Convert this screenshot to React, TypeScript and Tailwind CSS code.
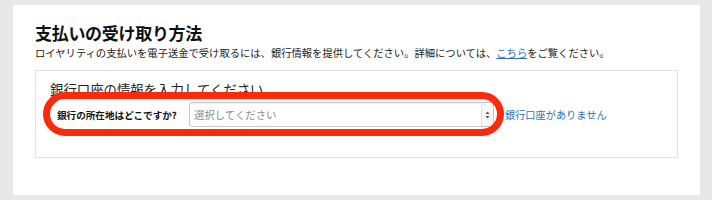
import React from "react";

const jp = { fontFamily: '"Noto Sans CJK JP", "Noto Sans", sans-serif' };

export default function App() {
  return (
    <div className="relative h-[200px] w-[712px] overflow-hidden bg-[#e8e8e8] pl-[13px] pr-[12px] pt-[5px]" style={jp}>
      <div className="h-[190px] bg-white pl-[22px] pr-[22px] pt-[18px]">
        <h1 className="text-[17px] font-bold leading-[20px] text-[#111] tracking-[-0.3px]">支払いの受け取り方法</h1>
        <p className="mt-[4px] text-[10.3px] leading-[12px] text-[#222]">
          ロイヤリティの支払いを電子送金で受け取るには、銀行情報を提供してください。詳細については、
          <span className="text-[#2f6fb7] underline">こちら</span>をご覧ください。
        </p>
        <div className="mt-[11px] h-[88px] border border-[#e2e2e2] pl-[14px] pt-[10px]">
          <h2 className="text-[13.4px] leading-[16px] text-[#222]">銀行口座の情報を入力してください</h2>
          <div className="ml-[7px] mt-[5px] flex items-center">
            <span className="w-[132px] text-[9.6px] font-bold leading-[12px] text-[#111]">銀行の所在地はどこですか?</span>
            <div className="flex h-[25px] w-[305px] items-stretch rounded-[3px] border border-[#c6c6c6] bg-white shadow-[inset_0_1px_1px_rgba(0,0,0,0.06)]">
              <span className="flex flex-1 items-center pl-[4px] text-[10.4px] text-[#8a8a8a]">選択してください</span>
              <span className="flex w-[12px] items-center justify-center border-l border-[#e2e2e2] bg-[#f7f7f7]">
                <svg width="5" height="8" viewBox="0 0 5 8">
                  <path d="M2.5 0.5 L4.5 3 L0.5 3 Z" fill="#555" />
                  <path d="M2.5 7.5 L4.5 5 L0.5 5 Z" fill="#555" />
                </svg>
              </span>
            </div>
            <span className="ml-[11px] text-[10.2px] leading-[12px] text-[#2f6fb7]">銀行口座がありません</span>
          </div>
        </div>
      </div>
      <div className="pointer-events-none absolute left-[43px] top-[92px] h-[44px] w-[461px] rounded-full border-[7px] border-[#fb2a0c]" />
    </div>
  );
}
